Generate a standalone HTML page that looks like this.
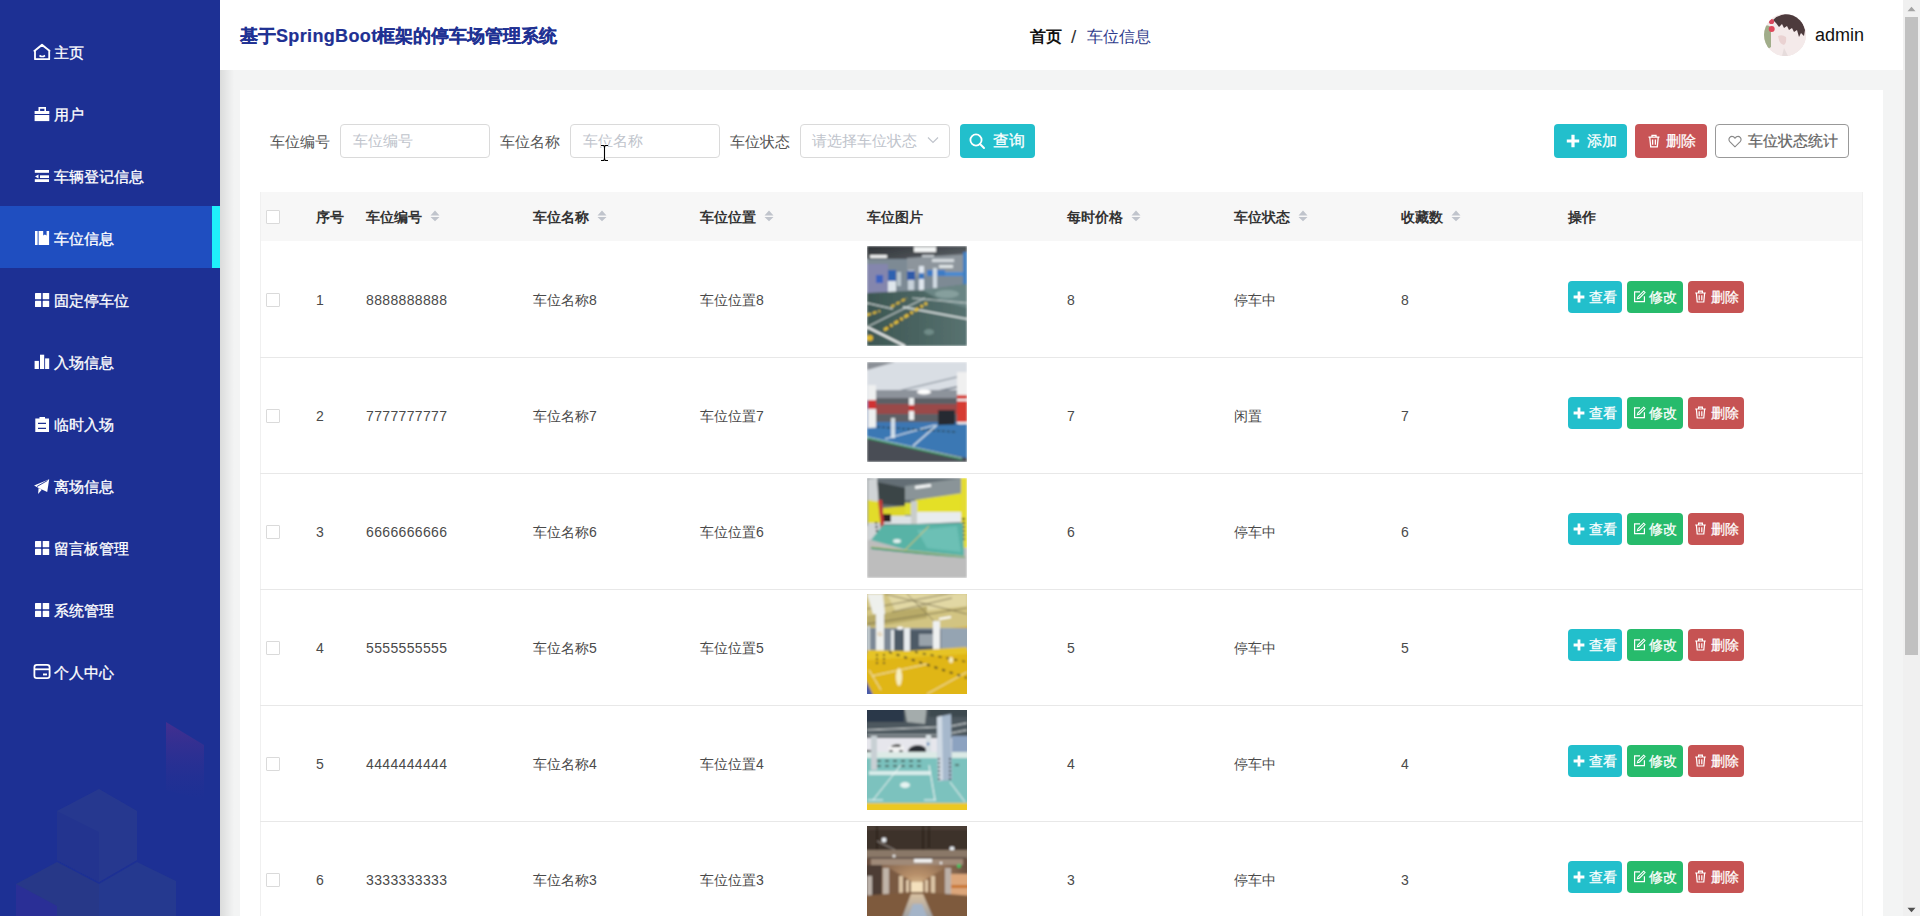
<!DOCTYPE html>
<html><head><meta charset="utf-8">
<style>
*{box-sizing:border-box;margin:0;padding:0}
html,body{width:1920px;height:916px;overflow:hidden}
body{font-family:"Liberation Sans",sans-serif;background:#f3f4f4;position:relative;color:#606266}
.abs{position:absolute}
#side{position:absolute;left:0;top:0;width:220px;height:916px;background:#1d3094;overflow:hidden}
.mi{position:absolute;left:0;width:220px;height:62px;color:#fff;font-size:15px;line-height:62px;-webkit-text-stroke:.3px #fff}
.mi .ic{position:absolute;left:33px;top:23px;width:18px;height:18px}
.mi .tx{position:absolute;left:54px;top:2px}
#actbg{position:absolute;left:0;top:206px;width:220px;height:62px;background:#1f4ec0}
#actbar{position:absolute;left:212px;top:206px;width:8px;height:62px;background:#1ff0fb}
#hdr{position:absolute;left:220px;top:0;width:1683px;height:70px;background:#fff}
#shadow{position:absolute;left:220px;top:0;width:14px;height:916px;background:linear-gradient(90deg,rgba(0,0,0,.10),rgba(0,0,0,0))}
#title{position:absolute;left:240px;top:25px;font-size:18px;font-weight:bold;color:#1f3193;line-height:22px;white-space:nowrap;-webkit-text-stroke:.2px #1f3193}
#bc{position:absolute;left:1029px;top:27px;font-size:16px;line-height:20px;white-space:nowrap}
#card{position:absolute;left:240px;top:90px;width:1643px;height:826px;background:#fff}
#sb{position:absolute;left:1903px;top:0;width:17px;height:916px;background:#f0f0f0}
#thumb{position:absolute;left:1905px;top:17px;width:13px;height:638px;background:#c1c1c1}
.lbl{position:absolute;top:132px;font-size:15px;line-height:20px;color:#555;white-space:nowrap}
.inp{position:absolute;top:124px;width:150px;height:34px;border:1px solid #dadada;border-radius:4px;background:#fff}
.ph{position:absolute;top:7px;left:12px;font-size:15px;line-height:18px;color:#c0c4cc;white-space:nowrap}
.btn{position:absolute;top:124px;height:34px;border-radius:4px;color:#fff;font-size:15px;line-height:34px;white-space:nowrap;-webkit-text-stroke:.25px currentColor}

.th{position:absolute;top:207px;font-size:14px;font-weight:bold;color:#333;line-height:20px;white-space:nowrap}
.car{position:absolute;top:210px;width:10px;height:12px}
.td{position:absolute;font-size:14px;color:#4a4a4a;line-height:20px;white-space:nowrap}
.cb{position:absolute;left:266px;width:14px;height:14px;border:1px solid #dadada;border-radius:1px;background:#fff}
.rowline{position:absolute;left:260px;width:1603px;height:1px;background:#e8e8e8}
.ab{position:absolute;height:32px;border-radius:4px;color:#fff;font-size:14px;line-height:32px;white-space:nowrap}
.ab svg{position:absolute}
.ab span{position:absolute;top:0;-webkit-text-stroke:.25px #fff}
.pic{position:absolute;left:867px;width:100px;height:100px;overflow:hidden}
</style></head><body>
<div id="side">
<div id="actbg"></div><div id="actbar"></div>
<svg class="abs" style="left:0;top:0" width="220" height="916" viewBox="0 0 220 916">
 <defs>
  <linearGradient id="pg" x1="0" y1="0" x2="0" y2="1"><stop offset="0" stop-color="#4a2f8f" stop-opacity=".85"/><stop offset="1" stop-color="#2a2f92" stop-opacity="0"/></linearGradient>
 </defs>
 <polygon points="166,722 204,745 204,800 166,790" fill="url(#pg)"/>
 <polygon points="99,789 137,811 137,860 99,882 57,860 57,811" fill="#283a8e" opacity=".9"/>
 <polygon points="57,811 99,832 99,882 57,860" fill="#23348f"/>
 <polygon points="16,884 57,862 99,884 99,916 16,916" fill="#273888"/>
 <polygon points="99,884 137,862 176,881 176,916 99,916" fill="#25398f"/>
 <polygon points="16,884 57,906 57,916 16,916" fill="#2a2f96"/>
 <g fill="none" stroke="#fff" stroke-width="1.8" stroke-linejoin="round">
  <path d="M35 59.2V50.5L42 45L49.2 50.5V59.2Z M33.8 51.5L42 44.6L50.2 51.5"/>
  <path d="M39.5 55.5Q42.2 57.6 45 55.5" stroke-width="1.6"/>
  <rect x="34.4" y="664.8" width="15.2" height="13.4" rx="2.4"/>
  <path d="M34.4 669.3H49.6"/>
 </g>
 <g fill="#fff">
  <path d="M38.5 107h7.5v4h-1.6v-2.2h-4.3v2.2h-1.6z"/>
  <rect x="34.6" y="111" width="14.7" height="3"/>
  <rect x="34.6" y="115" width="14.7" height="6.1"/>
  <rect x="34.8" y="170" width="14.2" height="2.8"/>
  <rect x="40" y="175.3" width="9" height="2.7"/>
  <path d="M35 176.6L38.5 174.6V178.6Z"/>
  <rect x="34.8" y="179.2" width="14.2" height="2.8"/>
  <rect x="35" y="231" width="2.6" height="14"/>
  <path d="M38.6 231H43.2V235.6L44.9 234.4L46.6 235.6V231H49.1V245H38.6Z"/>
  <rect x="35" y="292.9" width="6.2" height="6.4" rx=".6"/><rect x="42.7" y="292.9" width="6.5" height="6.4" rx=".6"/>
  <rect x="35" y="300.8" width="6.2" height="6.2" rx=".6"/><rect x="42.7" y="300.8" width="6.5" height="6.2" rx=".6"/>
  <rect x="34.6" y="360.9" width="4.3" height="8.1"/><rect x="40" y="354.7" width="4.2" height="14.3"/><rect x="45.1" y="358.4" width="4.1" height="10.6"/>
  <path d="M35.3 418.6h4.2v-1.7h5.5v1.7h4v13.5H35.3z"/>
  <path d="M49.2 479.2L34.1 485.4L38.6 487.9L47.2 492Z"/><path d="M38.6 487.9L38.1 494.1L41.8 489.8Z"/>
  <g transform="translate(0,248)"><rect x="35" y="292.9" width="6.2" height="6.4" rx=".6"/><rect x="42.7" y="292.9" width="6.5" height="6.4" rx=".6"/>
  <rect x="35" y="300.8" width="6.2" height="6.2" rx=".6"/><rect x="42.7" y="300.8" width="6.5" height="6.2" rx=".6"/></g>
  <g transform="translate(0,310)"><rect x="35" y="292.9" width="6.2" height="6.4" rx=".6"/><rect x="42.7" y="292.9" width="6.5" height="6.4" rx=".6"/>
  <rect x="35" y="300.8" width="6.2" height="6.2" rx=".6"/><rect x="42.7" y="300.8" width="6.5" height="6.2" rx=".6"/></g>
  <rect x="43" y="673.5" width="4" height="1.9"/>
 </g>
 <g stroke="#1d3094" stroke-width="1.2"><path d="M38 423.4h8M38 428.3h8"/></g>
 <path d="M37 486.5L47.5 480.5" stroke="#1d3094" stroke-width=".9"/>
</svg>
<div class="mi" style="top:20px"><span class="tx">主页</span></div>
<div class="mi" style="top:82px"><span class="tx">用户</span></div>
<div class="mi" style="top:144px"><span class="tx">车辆登记信息</span></div>
<div class="mi act" style="top:206px"><span class="tx">车位信息</span></div>
<div class="mi" style="top:268px"><span class="tx">固定停车位</span></div>
<div class="mi" style="top:330px"><span class="tx">入场信息</span></div>
<div class="mi" style="top:392px"><span class="tx">临时入场</span></div>
<div class="mi" style="top:454px"><span class="tx">离场信息</span></div>
<div class="mi" style="top:516px"><span class="tx">留言板管理</span></div>
<div class="mi" style="top:578px"><span class="tx">系统管理</span></div>
<div class="mi" style="top:640px"><span class="tx">个人中心</span></div>
</div>
<div id="shadow"></div>
<div id="hdr"></div>
<div id="title">基于<span style="letter-spacing:.35px">SpringBoot</span>框架的停车场管理系统</div>
<div id="bc"><b class="abs" style="left:1px;color:#111">首页</b><span class="abs" style="left:42px;top:-1px;color:#333;font-size:19px;line-height:22px">/</span><span class="abs" style="left:58px;color:#303b8c">车位信息</span></div>
<div id="card"></div>
<div class="abs" style="left:1764px;top:14px;width:42px;height:42px;border-radius:50%;overflow:hidden;background:#f1e4e2">
<svg width="42" height="42" viewBox="0 0 42 42"><defs><filter id="avb"><feGaussianBlur stdDeviation=".7"/></filter></defs><g filter="url(#avb)"><rect x="-2" y="-2" width="46" height="46" fill="#f4eaea"/>
<path d="M9 6Q16 -1 28 0Q38 3 41 16L40 22L37 19L35 23L33 16L30 18L28 14L25 16L23 12L20 14L18 10L15 13L12 9Z" fill="#4e3a3e"/>
<path d="M0 12Q3 10 7 13L7 33Q4 36 0 34Z" fill="#a1ad8a"/>
<circle cx="7.5" cy="7.5" r="2.6" fill="#d84a5e"/><circle cx="7.7" cy="15" r="3" fill="#e04a5c"/>
<path d="M14 22Q18 20 22 23Q23 28 20 31Q16 30 15 26Z" fill="#ead2d2"/>
<path d="M20 34L24 42H18Z" fill="#e6dcdc"/>
</g></svg></div>
<div class="abs" style="left:1815px;top:24px;font-size:18px;line-height:22px;color:#111">admin</div>
<div class="lbl" style="left:270px">车位编号</div><div class="inp" style="left:340px"><span class="ph">车位编号</span></div><div class="lbl" style="left:500px">车位名称</div><div class="inp" style="left:570px"><span class="ph">车位名称</span></div><div class="lbl" style="left:730px">车位状态</div><div class="inp" style="left:800px"><span class="ph" style="left:10.5px">请选择车位状态</span>
<svg class="abs" style="left:126px;top:11px" width="12" height="8" viewBox="0 0 12 8"><path d="M1 1.5L6 6.5L11 1.5" fill="none" stroke="#c0c4cc" stroke-width="1.2"/></svg></div>
<div class="btn" style="left:960px;width:75px;background:#22bfcc">
<svg class="abs" style="left:9px;top:9px" width="17" height="17" viewBox="0 0 17 17"><circle cx="7" cy="7" r="5.6" fill="none" stroke="#fff" stroke-width="1.8"/><path d="M11 11L15 15" stroke="#fff" stroke-width="2" stroke-linecap="round"/></svg>
<span class="abs" style="left:33px;top:0;font-size:16px">查询</span></div>
<div class="btn" style="left:1554px;width:73px;background:#22bfcc">
<svg class="abs" style="left:12px;top:10px" width="14" height="14" viewBox="0 0 14 14"><path d="M5.4 0.8h3.2v4.6h4.6v3.2H8.6v4.6H5.4V8.6H0.8V5.4h4.6z" fill="#fff"/></svg>
<span class="abs" style="left:33px;top:0">添加</span></div>
<div class="btn" style="left:1635px;width:72px;background:#c85456">
<svg class="abs" style="left:12px;top:10px" width="14" height="14" viewBox="0 0 14 14"><path d="M1.5 3.2h11M5 3V1.4h4V3M2.8 3.6l.9 9.2h6.6l.9-9.2M5.6 5.5v5.3M8.4 5.5v5.3" fill="none" stroke="#fff" stroke-width="1.3"/></svg>
<span class="abs" style="left:31px;top:0">删除</span></div>
<div class="btn" style="left:1715px;width:134px;background:#fff;border:1px solid #999;color:#666">
<svg class="abs" style="left:12px;top:10px" width="14" height="13" viewBox="0 0 14 13"><path d="M7 11.8L1.8 6.6Q.2 4.6 1.6 2.6Q3.4.6 5.6 1.8L7 3.2L8.4 1.8Q10.6.6 12.4 2.6Q13.8 4.6 12.2 6.6Z" fill="none" stroke="#888" stroke-width="1.1"/></svg>
<span class="abs" style="left:32px;top:-1px">车位状态统计</span></div>
<div class="abs" style="left:260px;top:192px;width:1603px;height:49px;background:#f7f7f7"></div><div class="abs" style="left:260px;top:192px;width:1px;height:724px;background:#f0f0f0"></div><div class="abs" style="left:1862px;top:192px;width:1px;height:724px;background:#f0f0f0"></div><div class="cb" style="top:210px"></div><div class="th" style="left:316px">序号</div><div class="th" style="left:366px">车位编号</div><svg class="car" style="left:430px" viewBox="0 0 10 12"><path d="M5 .5L9.5 5.5H.5Z M5 11.3L9.5 7H.5Z" fill="#c0c4cc"/></svg><div class="th" style="left:533px">车位名称</div><svg class="car" style="left:597px" viewBox="0 0 10 12"><path d="M5 .5L9.5 5.5H.5Z M5 11.3L9.5 7H.5Z" fill="#c0c4cc"/></svg><div class="th" style="left:700px">车位位置</div><svg class="car" style="left:764px" viewBox="0 0 10 12"><path d="M5 .5L9.5 5.5H.5Z M5 11.3L9.5 7H.5Z" fill="#c0c4cc"/></svg><div class="th" style="left:867px">车位图片</div><div class="th" style="left:1067px">每时价格</div><svg class="car" style="left:1131px" viewBox="0 0 10 12"><path d="M5 .5L9.5 5.5H.5Z M5 11.3L9.5 7H.5Z" fill="#c0c4cc"/></svg><div class="th" style="left:1234px">车位状态</div><svg class="car" style="left:1298px" viewBox="0 0 10 12"><path d="M5 .5L9.5 5.5H.5Z M5 11.3L9.5 7H.5Z" fill="#c0c4cc"/></svg><div class="th" style="left:1401px">收藏数</div><svg class="car" style="left:1451px" viewBox="0 0 10 12"><path d="M5 .5L9.5 5.5H.5Z M5 11.3L9.5 7H.5Z" fill="#c0c4cc"/></svg><div class="th" style="left:1568px">操作</div>
<div class="cb" style="top:293px"></div><div class="td" style="left:316px;top:290px">1</div><div class="td" style="left:366px;top:290px;letter-spacing:.35px">8888888888</div><div class="td" style="left:533px;top:290px">车位名称8</div><div class="td" style="left:700px;top:290px">车位位置8</div><div class="pic" id="pic0" style="top:246px"><svg width="100" height="100" viewBox="0 0 100 100"><defs><filter id="bl0" x="-10%" y="-10%" width="120%" height="120%"><feGaussianBlur stdDeviation=".8" edgeMode="duplicate"/></filter></defs><g filter="url(#bl0)">
<defs><linearGradient id="g1f" x1="0" y1="0" x2="1" y2="0"><stop offset="0" stop-color="#3c5652"/><stop offset="1" stop-color="#587270"/></linearGradient>
<linearGradient id="g1c" x1="0" y1="0" x2="1" y2="1"><stop offset="0" stop-color="#2f3337"/><stop offset="1" stop-color="#6a7076"/></linearGradient></defs>
<rect width="100" height="100" fill="url(#g1f)"/>
<rect width="100" height="24" fill="url(#g1c)"/>
<rect x="0" y="13" width="100" height="34" fill="#7d8a94"/>
<polygon points="40,12 100,8 100,30 40,30" fill="#8d959c"/>
<rect x="0" y="18" width="21" height="29" fill="#8486ad"/>
<rect x="9" y="29" width="7" height="8" fill="#3a62c0"/>
<rect x="21" y="24" width="8" height="23" fill="#dfe6ec"/><rect x="21" y="24" width="8" height="11" fill="#2d62b0"/>
<rect x="30" y="26" width="4" height="14" fill="#b8c4cc"/>
<rect x="41" y="24" width="6" height="20" fill="#c8d2da"/><rect x="40" y="25" width="8" height="9" fill="#2e5aa8"/>
<rect x="52" y="20" width="5" height="26" fill="#dfe6ee"/><rect x="52" y="27" width="5" height="6" fill="#3777c0"/>
<rect x="60" y="24" width="18" height="6" fill="#3d7cc6"/>
<rect x="66" y="22" width="4" height="20" fill="#d0dae2"/>
<rect x="78" y="26" width="20" height="4" fill="#4a8ad0"/>
<rect x="96" y="6" width="4" height="50" fill="#3f7fc0"/>
<rect x="47" y="1" width="22" height="5" fill="#f4f6f6"/>
<rect x="3" y="9" width="17" height="3" fill="#eef0f0"/>
<rect x="65" y="13" width="22" height="3" fill="#d6dce0"/>
<rect x="72" y="19" width="14" height="3" fill="#dfe4e6"/>
<rect x="55" y="9" width="12" height="2" fill="#c6ccd0"/>
<polygon points="0,47 60,44 100,38 100,100 0,100" fill="url(#g1f)"/>
<polygon points="55,44 100,38 100,62 75,55" fill="#6a8584"/>
<ellipse cx="80" cy="48" rx="12" ry="4" fill="#9ab0ae" opacity=".6"/>
<path d="M0 81L38 100" stroke="#f0f2f2" stroke-width="2.2"/>
<path d="M0 57L26 63" stroke="#e0e6e6" stroke-width="1.2"/>
<path d="M2 80L58 52" stroke="#dfe5e5" stroke-width="1"/>
<path d="M36 61L100 73" stroke="#e6ecec" stroke-width="1.4"/>
<path d="M45 52L100 57" stroke="#c8d2d2" stroke-width="1"/>
<path d="M17 84L60 57" stroke="#e8c232" stroke-width="2.8" stroke-dasharray="5 2 3 2"/>
<path d="M17 84L60 57" stroke="#1a1a1a" stroke-width="2.8" stroke-dasharray="0 5 2 5" opacity=".8"/>
<path d="M24 61L40 52" stroke="#e0bc30" stroke-width="2.2" stroke-dasharray="4 2"/>
<path d="M0 69L13 65" stroke="#e6c030" stroke-width="2.2" stroke-dasharray="4 2"/>
<circle cx="3" cy="92" r="3" fill="#e2b82c"/>
<ellipse cx="62" cy="86" rx="5" ry="3" fill="#708c88"/>
</g></svg></div><div class="td" style="left:1067px;top:290px">8</div><div class="td" style="left:1234px;top:290px">停车中</div><div class="td" style="left:1401px;top:290px">8</div><div class="ab" style="left:1568px;top:281px;width:54px;background:#22bfcc"><svg style="left:5px;top:10px" width="12" height="12" viewBox="0 0 12 12"><path d="M4.6 .6h2.8v4h4v2.8h-4v4H4.6v-4h-4V4.6h4z" fill="#fff"/></svg><span style="left:21px">查看</span></div><div class="ab" style="left:1627px;top:281px;width:56px;background:#27bb6c"><svg style="left:6px;top:9px" width="13" height="13" viewBox="0 0 13 13"><path d="M7 1.8H1.6v9.8h9.8V6.2" fill="none" stroke="#fff" stroke-width="1.2"/><path d="M10.6 1.2l1.4 1.4-5.6 5.6-2 .6.6-2z" fill="none" stroke="#fff" stroke-width="1.1"/></svg><span style="left:22px">修改</span></div><div class="ab" style="left:1688px;top:281px;width:56px;background:#c65353"><svg style="left:6px;top:9px" width="13" height="13" viewBox="0 0 13 13"><path d="M1.2 3h10.6M4.6 2.8V1.2h3.8v1.6M2.4 3.4l.8 8.6h6.6l.8-8.6M5.2 5.2v5M7.8 5.2v5" fill="none" stroke="#fff" stroke-width="1.2"/></svg><span style="left:23px">删除</span></div><div class="rowline" style="top:357px"></div>
<div class="cb" style="top:409px"></div><div class="td" style="left:316px;top:406px">2</div><div class="td" style="left:366px;top:406px;letter-spacing:.35px">7777777777</div><div class="td" style="left:533px;top:406px">车位名称7</div><div class="td" style="left:700px;top:406px">车位位置7</div><div class="pic" id="pic1" style="top:362px"><svg width="100" height="100" viewBox="0 0 100 100"><defs><filter id="bl1" x="-10%" y="-10%" width="120%" height="120%"><feGaussianBlur stdDeviation=".8" edgeMode="duplicate"/></filter></defs><g filter="url(#bl1)">
<rect width="100" height="100" fill="#3e76b2"/>
<polygon points="0,0 100,0 100,30 0,38" fill="#d9dee4"/>
<polygon points="0,0 28,0 0,8" fill="#8a8f96"/>
<path d="M10 34L90 15" stroke="#7d8792" stroke-width="1.2"/>
<path d="M10 42L90 25" stroke="#6b7582" stroke-width="1.5"/>
<rect x="8" y="30" width="84" height="30" fill="#5d6066"/>
<rect x="8" y="28" width="84" height="8" fill="#8d939b"/>
<ellipse cx="57" cy="30" rx="7" ry="2.5" fill="#fff"/>
<rect x="8" y="42" width="84" height="10" fill="#9a4a4a"/>
<rect x="42" y="36" width="5" height="22" fill="#eceff0"/><rect x="42" y="43" width="5" height="6" fill="#c83030"/>
<rect x="1" y="23" width="8" height="44" fill="#eef0f0"/><rect x="1" y="38" width="8" height="9" fill="#d03030"/>
<rect x="90" y="10" width="10" height="78" fill="#f0f0f0"/><rect x="90" y="33" width="10" height="27" fill="#d63a32"/><rect x="90" y="37" width="10" height="2" fill="#f4f4f4"/>
<rect x="89" y="62" width="3" height="26" fill="#302a20"/>
<rect x="71" y="48" width="17" height="21" fill="#252a30"/>
<polygon points="0,66 100,62 100,100 0,100" fill="#3a78b4"/>
<polygon points="0,76 0,100 100,100 100,96" fill="#4a4e54"/>
<path d="M0 76L95 97" stroke="#2a8a5a" stroke-width="2"/>
<path d="M0 75L95 96" stroke="#e8eef0" stroke-width=".7"/>
<path d="M18 77L68 63" stroke="#e8f0f4" stroke-width="1"/>
<path d="M46 84L70 63" stroke="#e8f0f4" stroke-width="1.2"/>
<path d="M10 65L90 70" stroke="#2b3a3a" stroke-width="1.2" stroke-dasharray="3 2"/>
<rect x="24" y="56" width="4" height="20" fill="#e8eef2" opacity=".85"/>
</g></svg></div><div class="td" style="left:1067px;top:406px">7</div><div class="td" style="left:1234px;top:406px">闲置</div><div class="td" style="left:1401px;top:406px">7</div><div class="ab" style="left:1568px;top:397px;width:54px;background:#22bfcc"><svg style="left:5px;top:10px" width="12" height="12" viewBox="0 0 12 12"><path d="M4.6 .6h2.8v4h4v2.8h-4v4H4.6v-4h-4V4.6h4z" fill="#fff"/></svg><span style="left:21px">查看</span></div><div class="ab" style="left:1627px;top:397px;width:56px;background:#27bb6c"><svg style="left:6px;top:9px" width="13" height="13" viewBox="0 0 13 13"><path d="M7 1.8H1.6v9.8h9.8V6.2" fill="none" stroke="#fff" stroke-width="1.2"/><path d="M10.6 1.2l1.4 1.4-5.6 5.6-2 .6.6-2z" fill="none" stroke="#fff" stroke-width="1.1"/></svg><span style="left:22px">修改</span></div><div class="ab" style="left:1688px;top:397px;width:56px;background:#c65353"><svg style="left:6px;top:9px" width="13" height="13" viewBox="0 0 13 13"><path d="M1.2 3h10.6M4.6 2.8V1.2h3.8v1.6M2.4 3.4l.8 8.6h6.6l.8-8.6M5.2 5.2v5M7.8 5.2v5" fill="none" stroke="#fff" stroke-width="1.2"/></svg><span style="left:23px">删除</span></div><div class="rowline" style="top:473px"></div>
<div class="cb" style="top:525px"></div><div class="td" style="left:316px;top:522px">3</div><div class="td" style="left:366px;top:522px;letter-spacing:.35px">6666666666</div><div class="td" style="left:533px;top:522px">车位名称6</div><div class="td" style="left:700px;top:522px">车位位置6</div><div class="pic" id="pic2" style="top:478px"><svg width="100" height="100" viewBox="0 0 100 100"><defs><filter id="bl2" x="-10%" y="-10%" width="120%" height="120%"><feGaussianBlur stdDeviation=".8" edgeMode="duplicate"/></filter></defs><g filter="url(#bl2)">
<rect width="100" height="100" fill="#bdbdbd"/>
<rect width="100" height="48" fill="#636e74"/>
<polygon points="10,4 38,10 38,28 12,26" fill="#3a4446"/>
<polygon points="38,8 96,0 96,20 38,22" fill="#8a9498"/>
<rect x="48" y="7" width="16" height="3" fill="#f6f8f8" transform="rotate(-8 56 8)"/>
<polygon points="48,22 96,15 96,34 48,34" fill="#e4e026"/>
<polygon points="16,30 38,28 38,38 16,40" fill="#dcd62a"/>
<rect x="38" y="25" width="7" height="12" fill="#dede30"/>
<polygon points="48,34 96,34 96,44 48,46" fill="#e8ecee"/>
<rect x="16" y="38" width="32" height="8" fill="#dde2e4"/>
<rect x="44" y="23" width="6" height="23" fill="#c9cdca"/>
<rect x="16" y="36" width="8" height="8" fill="#2a2020"/>
<polygon points="1,1 10,0 14,60 1,62" fill="#d0d4d6"/>
<polygon points="1,22 13,24 14,45 1,45" fill="#e2dc2a"/>
<polygon points="11,22 15,22 18,58 15,60" fill="#c63838"/>
<path d="M9 44L11 62" stroke="#222" stroke-width="2.2" stroke-dasharray="2 2"/>
<rect x="94" y="0" width="6" height="70" fill="#e4dc30"/>
<path d="M96.5 40V64" stroke="#222" stroke-width="3" stroke-dasharray="2 2"/>
<polygon points="4,62 16,47 96,45 97,78 40,72" fill="#58b3a6"/>
<polygon points="50,52 90,48 94,74 60,70" fill="#6cc0b5"/>
<path d="M38 72L62 48" stroke="#d6c44a" stroke-width="1"/>
<path d="M4 70L98 80" stroke="#2e9a7e" stroke-width="2.2"/>
<path d="M4 69L98 79" stroke="#c8c040" stroke-width=".6"/>
<polygon points="0,72 100,80 100,100 0,100" fill="#bdbdbd"/>
<ellipse cx="30" cy="63" rx="4" ry="2" fill="#e0f0ee"/>
</g></svg></div><div class="td" style="left:1067px;top:522px">6</div><div class="td" style="left:1234px;top:522px">停车中</div><div class="td" style="left:1401px;top:522px">6</div><div class="ab" style="left:1568px;top:513px;width:54px;background:#22bfcc"><svg style="left:5px;top:10px" width="12" height="12" viewBox="0 0 12 12"><path d="M4.6 .6h2.8v4h4v2.8h-4v4H4.6v-4h-4V4.6h4z" fill="#fff"/></svg><span style="left:21px">查看</span></div><div class="ab" style="left:1627px;top:513px;width:56px;background:#27bb6c"><svg style="left:6px;top:9px" width="13" height="13" viewBox="0 0 13 13"><path d="M7 1.8H1.6v9.8h9.8V6.2" fill="none" stroke="#fff" stroke-width="1.2"/><path d="M10.6 1.2l1.4 1.4-5.6 5.6-2 .6.6-2z" fill="none" stroke="#fff" stroke-width="1.1"/></svg><span style="left:22px">修改</span></div><div class="ab" style="left:1688px;top:513px;width:56px;background:#c65353"><svg style="left:6px;top:9px" width="13" height="13" viewBox="0 0 13 13"><path d="M1.2 3h10.6M4.6 2.8V1.2h3.8v1.6M2.4 3.4l.8 8.6h6.6l.8-8.6M5.2 5.2v5M7.8 5.2v5" fill="none" stroke="#fff" stroke-width="1.2"/></svg><span style="left:23px">删除</span></div><div class="rowline" style="top:589px"></div>
<div class="cb" style="top:641px"></div><div class="td" style="left:316px;top:638px">4</div><div class="td" style="left:366px;top:638px;letter-spacing:.35px">5555555555</div><div class="td" style="left:533px;top:638px">车位名称5</div><div class="td" style="left:700px;top:638px">车位位置5</div><div class="pic" id="pic3" style="top:594px"><svg width="100" height="100" viewBox="0 0 100 100"><defs><filter id="bl3" x="-10%" y="-10%" width="120%" height="120%"><feGaussianBlur stdDeviation=".8" edgeMode="duplicate"/></filter></defs><g filter="url(#bl3)">
<rect x="-5" y="-5" width="110" height="110" fill="#dcb418"/>
<polygon points="-5,-5 105,-5 105,32 -5,42" fill="#d2c482"/>
<polygon points="20,0 100,0 100,12 30,20" fill="#e2d8a4"/>
<polygon points="0,22 60,12 60,24 0,34" fill="#b8aa68"/>
<path d="M18 0L100 20M0 15L90 -2M25 18L85 4M0 30L100 14M40 0L70 30" stroke="#6e6444" stroke-width=".8"/>
<polygon points="0,0 16,0 18,20 6,20" fill="#eef0ec"/>
<rect x="-5" y="34" width="110" height="26" fill="#7b8895"/>
<rect x="24" y="36" width="50" height="22" fill="#4e5a66"/>
<rect x="52" y="40" width="14" height="12" fill="#98a2aa"/>
<rect x="74" y="34" width="31" height="26" fill="#95a4b2"/>
<rect x="9" y="14" width="8" height="60" fill="#eef0ee"/>
<text x="10.5" y="42" font-size="6" fill="#d0a050" font-family="Liberation Sans">G</text>
<rect x="24" y="36" width="3" height="22" fill="#e4e8ea"/>
<rect x="37" y="34" width="6" height="26" fill="#e8ecee"/>
<rect x="66" y="27" width="7" height="33" fill="#eef0f0"/>
<rect x="0" y="32" width="3" height="40" fill="#c8d0d4"/>
<ellipse cx="33" cy="34" rx="3" ry="1.5" fill="#fff"/>
<rect x="72" y="23" width="12" height="2" fill="#fff" transform="rotate(-10 78 24)"/>
<polygon points="-5,62 105,56 105,105 -5,105" fill="#e0b616"/>
<polygon points="0,56 40,57 100,53 100,60 0,66" fill="#e6c428"/>
<path d="M5 82L60 70M60 100L100 78M2 76L14 96" stroke="#f2e6b0" stroke-width="1"/>
<path d="M22 58L100 84" stroke="#2a2a24" stroke-width="1.8" stroke-dasharray="3 5"/>
<path d="M48 58L100 68" stroke="#2a2a24" stroke-width="1.4" stroke-dasharray="3 5"/>
<ellipse cx="32" cy="83" rx="3" ry="9" fill="#f6eec0"/>
<ellipse cx="84" cy="66" rx="2" ry="3" fill="#f6eec0"/>
<polygon points="-5,78 8,105 -5,105" fill="#4a5aa8"/>
<path d="M10 60V70M17 60V70" stroke="#222" stroke-width="1.4" stroke-dasharray="2 2"/>
</g></svg></div><div class="td" style="left:1067px;top:638px">5</div><div class="td" style="left:1234px;top:638px">停车中</div><div class="td" style="left:1401px;top:638px">5</div><div class="ab" style="left:1568px;top:629px;width:54px;background:#22bfcc"><svg style="left:5px;top:10px" width="12" height="12" viewBox="0 0 12 12"><path d="M4.6 .6h2.8v4h4v2.8h-4v4H4.6v-4h-4V4.6h4z" fill="#fff"/></svg><span style="left:21px">查看</span></div><div class="ab" style="left:1627px;top:629px;width:56px;background:#27bb6c"><svg style="left:6px;top:9px" width="13" height="13" viewBox="0 0 13 13"><path d="M7 1.8H1.6v9.8h9.8V6.2" fill="none" stroke="#fff" stroke-width="1.2"/><path d="M10.6 1.2l1.4 1.4-5.6 5.6-2 .6.6-2z" fill="none" stroke="#fff" stroke-width="1.1"/></svg><span style="left:22px">修改</span></div><div class="ab" style="left:1688px;top:629px;width:56px;background:#c65353"><svg style="left:6px;top:9px" width="13" height="13" viewBox="0 0 13 13"><path d="M1.2 3h10.6M4.6 2.8V1.2h3.8v1.6M2.4 3.4l.8 8.6h6.6l.8-8.6M5.2 5.2v5M7.8 5.2v5" fill="none" stroke="#fff" stroke-width="1.2"/></svg><span style="left:23px">删除</span></div><div class="rowline" style="top:705px"></div>
<div class="cb" style="top:757px"></div><div class="td" style="left:316px;top:754px">5</div><div class="td" style="left:366px;top:754px;letter-spacing:.35px">4444444444</div><div class="td" style="left:533px;top:754px">车位名称4</div><div class="td" style="left:700px;top:754px">车位位置4</div><div class="pic" id="pic4" style="top:710px"><svg width="100" height="100" viewBox="0 0 100 100"><defs><filter id="bl4" x="-10%" y="-10%" width="120%" height="120%"><feGaussianBlur stdDeviation=".8" edgeMode="duplicate"/></filter></defs><g filter="url(#bl4)">
<rect x="-5" y="-5" width="110" height="110" fill="#7cc2be"/>
<rect x="-5" y="-5" width="110" height="33" fill="#4e585e"/>
<rect x="-5" y="-5" width="42" height="17" fill="#2a3848"/>
<polygon points="37,-5 60,-5 58,14 40,12" fill="#a4acac"/>
<rect x="62" y="-5" width="43" height="12" fill="#3c4850"/>
<path d="M0 20L72 17M80 17L100 13M80 24L100 20" stroke="#d8dee0" stroke-width="1.2"/>
<path d="M0 25H70" stroke="#8a9296" stroke-width="2"/>
<rect x="-5" y="28" width="110" height="15" fill="#e6e6ec"/>
<rect x="85" y="26" width="20" height="16" fill="#8ca2c0"/>
<path d="M21 41Q21 35 28 34Q35 33 37 38L37 42H21Z" fill="#f2f2f2"/><path d="M24 36Q29 33 34 35L33 37H25Z" fill="#333"/>
<circle cx="24" cy="42" r="2" fill="#222"/><circle cx="34" cy="42" r="2" fill="#222"/>
<path d="M41 41Q42 36 50 35Q57 35 59 39L59 42H41Z" fill="#2b2f34"/>
<rect x="-5" y="40" width="10" height="8" rx="3" fill="#2a2e33"/>
<rect x="59" y="25" width="5" height="20" fill="#d8e0e4"/>
<polygon points="60,32 63,34 60,36" fill="#4070b0"/>
<rect x="-5" y="42" width="110" height="6" fill="#dceae6"/>
<path d="M10 51H58M10 56H58M88 55H96" stroke="#3e4a4a" stroke-width="1.6" stroke-dasharray="4 4"/>
<rect x="2" y="61" width="62" height="4" fill="#d8ecea"/>
<path d="M6 90L34 55M62 55L68 90M1 90H16M57 90H69M83 72L98 92" stroke="#f4f8f8" stroke-width="1"/>
<ellipse cx="38" cy="75" rx="5" ry="3" fill="#e6f4f2"/>
<rect x="4" y="26" width="6" height="34" fill="#c8d0d4"/>
<polygon points="70,7 84,4 85,70 71,71" fill="#a6b8cc"/>
<polygon points="70,7 75,6 76,70 71,71" fill="#d0dae4"/>
<path d="M72 48V70M83 48V70" stroke="#222" stroke-width="1.8" stroke-dasharray="2 2"/>
<rect x="-5" y="93" width="110" height="12" fill="#ecc820"/>
</g></svg></div><div class="td" style="left:1067px;top:754px">4</div><div class="td" style="left:1234px;top:754px">停车中</div><div class="td" style="left:1401px;top:754px">4</div><div class="ab" style="left:1568px;top:745px;width:54px;background:#22bfcc"><svg style="left:5px;top:10px" width="12" height="12" viewBox="0 0 12 12"><path d="M4.6 .6h2.8v4h4v2.8h-4v4H4.6v-4h-4V4.6h4z" fill="#fff"/></svg><span style="left:21px">查看</span></div><div class="ab" style="left:1627px;top:745px;width:56px;background:#27bb6c"><svg style="left:6px;top:9px" width="13" height="13" viewBox="0 0 13 13"><path d="M7 1.8H1.6v9.8h9.8V6.2" fill="none" stroke="#fff" stroke-width="1.2"/><path d="M10.6 1.2l1.4 1.4-5.6 5.6-2 .6.6-2z" fill="none" stroke="#fff" stroke-width="1.1"/></svg><span style="left:22px">修改</span></div><div class="ab" style="left:1688px;top:745px;width:56px;background:#c65353"><svg style="left:6px;top:9px" width="13" height="13" viewBox="0 0 13 13"><path d="M1.2 3h10.6M4.6 2.8V1.2h3.8v1.6M2.4 3.4l.8 8.6h6.6l.8-8.6M5.2 5.2v5M7.8 5.2v5" fill="none" stroke="#fff" stroke-width="1.2"/></svg><span style="left:23px">删除</span></div><div class="rowline" style="top:821px"></div>
<div class="cb" style="top:873px"></div><div class="td" style="left:316px;top:870px">6</div><div class="td" style="left:366px;top:870px;letter-spacing:.35px">3333333333</div><div class="td" style="left:533px;top:870px">车位名称3</div><div class="td" style="left:700px;top:870px">车位位置3</div><div class="pic" id="pic5" style="top:826px"><svg width="100" height="100" viewBox="0 0 100 100"><defs><filter id="bl5" x="-10%" y="-10%" width="120%" height="120%"><feGaussianBlur stdDeviation=".8" edgeMode="duplicate"/></filter></defs><g filter="url(#bl5)">
<defs><radialGradient id="g6c" cx=".5" cy=".66" r=".5"><stop offset="0" stop-color="#f2dcb0"/><stop offset=".35" stop-color="#b8906a"/><stop offset="1" stop-color="#6a5040"/></radialGradient>
<linearGradient id="g6f" x1="0" y1="0" x2="0" y2="1"><stop offset="0" stop-color="#d8c0a0"/><stop offset="1" stop-color="#7e8ea4"/></linearGradient></defs>
<rect x="-5" y="-5" width="110" height="110" fill="url(#g6c)"/>
<rect x="-5" y="-5" width="110" height="29" fill="#3c302b"/>
<rect x="-5" y="-5" width="110" height="9" fill="#4a3c34"/>
<path d="M10 0V24M56 0V24M62 0V22" stroke="#1e1814" stroke-width="1"/>
<path d="M10 15L28 24" stroke="#a09890" stroke-width="1"/>
<circle cx="17" cy="14" r="2.4" fill="#eef2f6"/><circle cx="85" cy="23" r="2.4" fill="#eef2f6"/>
<rect x="-5" y="24" width="110" height="9" fill="#8a7868"/>
<path d="M0 32H100" stroke="#3a2e28" stroke-width="1"/>
<rect x="4" y="33" width="92" height="6" fill="#a08a78"/>
<rect x="47" y="33" width="18" height="3.5" fill="#f6f6f6"/>
<circle cx="27" cy="30" r="1.5" fill="#f0f0f0"/><circle cx="74" cy="37" r="1.3" fill="#f0f0f0"/>
<circle cx="92" cy="40" r="2" fill="#38c860"/>
<rect x="-5" y="39" width="20" height="70" fill="#4e3e34"/>
<rect x="0" y="50" width="5" height="50" fill="#bcb2aa"/>
<rect x="16" y="42" width="6" height="36" fill="#c0b4a8"/>
<polygon points="22,42 44,55 44,68 22,76" fill="#7a5a42"/>
<polygon points="78,42 56,55 56,68 78,76" fill="#8a6648"/>
<rect x="32" y="50" width="4" height="20" fill="#dcc4a4"/><rect x="39" y="54" width="3" height="14" fill="#e0c8a8"/>
<rect x="58" y="54" width="3" height="14" fill="#e0c8a8"/><rect x="64" y="50" width="4" height="20" fill="#dcc4a4"/>
<rect x="44" y="56" width="12" height="10" fill="#f4e0bc"/>
<rect x="78" y="42" width="6" height="36" fill="#bcb0a8"/>
<rect x="84" y="48" width="21" height="24" fill="#dca67a"/>
<rect x="84" y="59" width="21" height="3" fill="#c8742e"/>
<polygon points="-5,70 44,66 56,66 105,70 105,105 -5,105" fill="#7e5a3c"/>
<polygon points="30,105 44,68 56,68 72,105" fill="url(#g6f)"/>
<polygon points="36,105 46,78 55,78 66,105" fill="#a4b4c8"/>
</g></svg></div><div class="td" style="left:1067px;top:870px">3</div><div class="td" style="left:1234px;top:870px">停车中</div><div class="td" style="left:1401px;top:870px">3</div><div class="ab" style="left:1568px;top:861px;width:54px;background:#22bfcc"><svg style="left:5px;top:10px" width="12" height="12" viewBox="0 0 12 12"><path d="M4.6 .6h2.8v4h4v2.8h-4v4H4.6v-4h-4V4.6h4z" fill="#fff"/></svg><span style="left:21px">查看</span></div><div class="ab" style="left:1627px;top:861px;width:56px;background:#27bb6c"><svg style="left:6px;top:9px" width="13" height="13" viewBox="0 0 13 13"><path d="M7 1.8H1.6v9.8h9.8V6.2" fill="none" stroke="#fff" stroke-width="1.2"/><path d="M10.6 1.2l1.4 1.4-5.6 5.6-2 .6.6-2z" fill="none" stroke="#fff" stroke-width="1.1"/></svg><span style="left:22px">修改</span></div><div class="ab" style="left:1688px;top:861px;width:56px;background:#c65353"><svg style="left:6px;top:9px" width="13" height="13" viewBox="0 0 13 13"><path d="M1.2 3h10.6M4.6 2.8V1.2h3.8v1.6M2.4 3.4l.8 8.6h6.6l.8-8.6M5.2 5.2v5M7.8 5.2v5" fill="none" stroke="#fff" stroke-width="1.2"/></svg><span style="left:23px">删除</span></div><div class="rowline" style="top:937px"></div>
<svg class="abs" style="left:598px;top:143px" width="12" height="20" viewBox="0 0 12 20"><path d="M3 2.5H5.6Q6.5 3 6.5 5V14.5Q6.5 17 5.6 17.5H3M10 2.5H7.4Q6.5 3 6.5 5V14.5Q6.5 17 7.4 17.5H10" fill="none" stroke="#fff" stroke-width="2.6"/><path d="M3 2.5H5.6Q6.5 3 6.5 5V14.5Q6.5 17 5.6 17.5H3M10 2.5H7.4Q6.5 3 6.5 5V14.5Q6.5 17 7.4 17.5H10" fill="none" stroke="#000" stroke-width="1.1"/></svg>
<div id="sb"><svg class="abs" style="left:4px;top:6px" width="9" height="6" viewBox="0 0 9 6"><path d="M4.5 .8L8.5 5.2H.5Z" fill="#a3a3a3"/></svg><svg class="abs" style="left:4px;top:907px" width="9" height="6" viewBox="0 0 9 6"><path d="M.5 .8H8.5L4.5 5.2Z" fill="#505050"/></svg></div><div id="thumb"></div>
</body></html>
